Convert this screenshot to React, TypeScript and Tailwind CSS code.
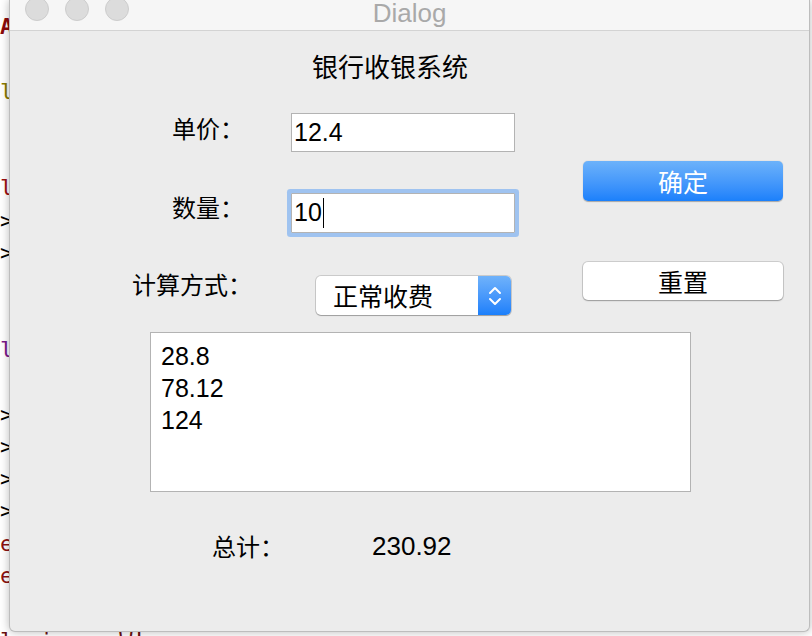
import React from "react";

const CJK = { fontFamily: '"Noto Sans CJK SC", "Liberation Sans", sans-serif' };
const MIX = { fontFamily: '"Liberation Sans", "Noto Sans CJK SC", sans-serif' };

// editor text behind the dialog, one entry per line (only first chars show)
const CODE_LINES: { text: string; cls: string }[] = [
  { text: "A", cls: "text-[#8b0a0a] font-bold" },
  { text: "", cls: "" },
  { text: "l", cls: "text-[#8a7a00]" },
  { text: "", cls: "" },
  { text: "", cls: "" },
  { text: "l", cls: "text-[#9a0f0f]" },
  { text: ">", cls: "text-black" },
  { text: ">", cls: "text-black" },
  { text: "", cls: "" },
  { text: "", cls: "" },
  { text: "l", cls: "text-[#7a1a8a]" },
  { text: "", cls: "" },
  { text: ">", cls: "text-black" },
  { text: ">", cls: "text-black" },
  { text: ">", cls: "text-black" },
  { text: ">", cls: "text-black" },
  { text: "e", cls: "text-[#8b1010]" },
  { text: "e", cls: "text-[#8b1010]" },
  { text: "", cls: "" },
  { text: "lunico   W!", cls: "text-[#6b1010]" },
];

function TrafficLight() {
  return <div className="w-[24px] h-[24px] rounded-full bg-[#dcdcdc] border border-[#cdcdcd]" />;
}

function Chevrons() {
  return (
    <svg width="16" height="24" viewBox="0 0 16 24" fill="none">
      <path d="M3 9 L8 4 L13 9" stroke="white" strokeWidth="2" strokeLinecap="round" strokeLinejoin="round" />
      <path d="M3 15 L8 20 L13 15" stroke="white" strokeWidth="2" strokeLinecap="round" strokeLinejoin="round" />
    </svg>
  );
}

export default function App() {
  return (
    <div className="relative w-[812px] h-[636px] overflow-hidden bg-white">
      {/* editor behind */}
      <div
        className="absolute inset-0 pt-[11px] text-[22px]"
        style={{ fontFamily: '"DejaVu Sans Mono", "Liberation Mono", monospace' }}
      >
        {CODE_LINES.map((l, i) => (
          <div key={i} className={`h-[32.3px] leading-[32.3px] whitespace-pre ${l.cls}`}>
            {l.text}
          </div>
        ))}
      </div>

      {/* dialog window */}
      <div className="relative z-10 ml-[9px] w-[801px] h-[632px] flex flex-col bg-[#ececec] rounded-b-[6px] border-x border-b border-[#bdbdbd] shadow-[0_0_10px_rgba(0,0,0,0.28)] overflow-hidden">
        {/* title bar */}
        <div className="relative h-[31px] shrink-0 bg-[#f6f6f6] border-b border-[#d3d3d3]">
          <div className="flex gap-[16px] pl-[15px] -mt-[3px]">
            <TrafficLight />
            <TrafficLight />
            <TrafficLight />
          </div>
          <div
            className="absolute inset-x-0 top-0 text-center text-[26px] leading-[26px] text-[#a9a9a9]"
            style={MIX}
          >
            Dialog
          </div>
        </div>

        {/* content */}
        <div className="flex flex-col text-black" style={CJK}>
          <div className="mt-[22px] pl-[302px] text-[26px] leading-[26px]">银行收银系统</div>

          <div className="mt-[34px] flex">
            {/* left column */}
            <div className="w-[573px] flex flex-col">
              <div className="flex items-start">
                <div className="ml-[162px] w-[119px] mt-[3px] text-[24px] leading-[24px]">单价：</div>
                <div
                  className="w-[224px] h-[39px] bg-white border border-[#b3b3b3] pl-[2px] flex items-center text-[25px]"
                  style={MIX}
                >
                  12.4
                </div>
              </div>

              <div className="mt-[41px] flex items-start">
                <div className="ml-[162px] w-[119px] mt-[2px] text-[24px] leading-[24px]">数量：</div>
                <div
                  className="w-[224px] h-[40px] bg-white border border-[#b3b3b3] rounded-[1px] shadow-[0_0_0_4px_#9fc3f0] pl-[2px] flex items-center text-[25px]"
                  style={MIX}
                >
                  10
                  <span className="ml-[1px] w-px h-[30px] bg-black" />
                </div>
              </div>

              <div className="mt-[39px] flex items-start">
                <div className="ml-[122px] w-[184px] text-[24px] leading-[24px]">计算方式：</div>
                <div className="mt-[4px] w-[195px] h-[39px] flex rounded-[5px] bg-white shadow-[0_0_0_1px_rgba(0,0,0,0.14),0_1px_1px_rgba(0,0,0,0.22)] overflow-hidden">
                  <div className="flex-1 pl-[17px] flex items-center text-[25px]">正常收费</div>
                  <div className="w-[33px] flex items-center justify-center bg-gradient-to-b from-[#6fb2fa] to-[#1a7ffb]">
                    <Chevrons />
                  </div>
                </div>
              </div>
            </div>

            {/* right column */}
            <div className="w-[200px] flex flex-col">
              <button className="mt-[48px] h-[40px] rounded-[5px] bg-gradient-to-b from-[#6cb2fa] to-[#1a80fb] shadow-[0_0.5px_1px_rgba(0,0,0,0.3)] text-white text-[25px] leading-none">
                确定
              </button>
              <button className="mt-[61px] h-[38px] rounded-[5px] bg-white shadow-[0_0_0_1px_rgba(0,0,0,0.13),0_1px_1.5px_rgba(0,0,0,0.25)] text-black text-[25px] leading-none">
                重置
              </button>
            </div>
          </div>

          {/* result box */}
          <div
            className="mt-[17px] ml-[140px] w-[541px] h-[160px] bg-white border border-[#b3b3b3] pl-[10px] pt-[7px] text-[25px] leading-[32px]"
            style={MIX}
          >
            <div>28.8</div>
            <div>78.12</div>
            <div>124</div>
          </div>

          {/* total */}
          <div className="mt-[41px] flex items-start">
            <div className="ml-[202px] w-[160px] text-[24px] leading-[26px]">总计：</div>
            <div className="text-[26px] leading-[26px]" style={MIX}>
              230.92
            </div>
          </div>
        </div>
      </div>
    </div>
  );
}
